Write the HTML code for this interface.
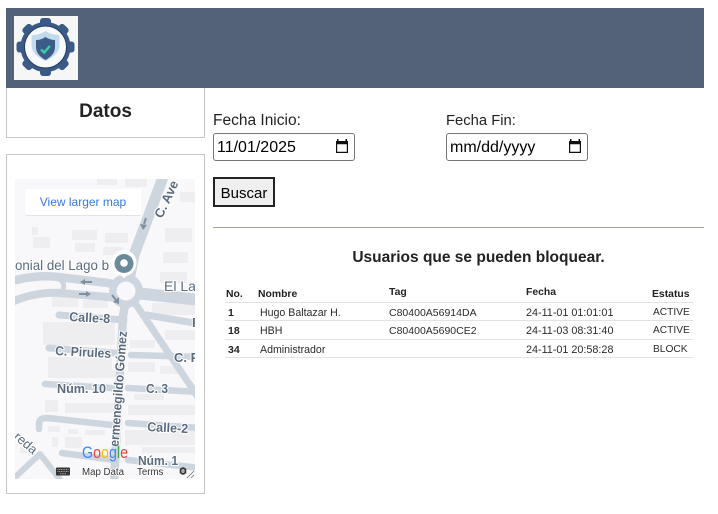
<!DOCTYPE html>
<html lang="es">
<head>
<meta charset="utf-8">
<style>
html,body{margin:0;padding:0;background:#fff;}
body{width:718px;height:514px;position:relative;overflow:hidden;font-family:"Liberation Sans",sans-serif;color:#212529;}
.a{position:absolute;white-space:nowrap;}
.hdr{left:6px;top:8px;width:698px;height:80px;background:#536179;}
.logo{left:14px;top:16px;width:64px;height:64px;background:#f6f6f6;}
.box{border:1px solid #c6c6c6;box-sizing:border-box;}
.lab{color:#222;line-height:18px;}
.inp{box-sizing:border-box;width:142px;height:28px;border:1px solid #767676;border-radius:3px;background:#fff;font-size:16px;color:#000;line-height:28px;padding-left:3px;}
.inp svg{position:absolute;right:4px;top:4px;}
.btn{left:213px;top:177px;width:62px;height:30px;box-sizing:border-box;border:2px solid #222;background:#efefef;font-size:15px;color:#000;text-align:center;line-height:29px;}
.th{font-size:10.4px;font-weight:bold;color:#222;line-height:12px;}
.td{font-size:10.6px;color:#2b2b2b;line-height:12px;}
.tb{font-size:10.5px;font-weight:bold;color:#222;line-height:12px;}
.ln{left:225px;width:468px;height:1px;background:#e2e2e2;}
</style>
</head>
<body>
<div class="a hdr"></div>
<div class="a logo">
<svg width="64" height="64" viewBox="0 0 64 64">
<g fill="#3c5a86">
<circle cx="31.500" cy="31" r="25"/>
<rect x="26" y="2" width="11" height="10" rx="3"/>
<rect x="26" y="50" width="11" height="10" rx="3"/>
<rect x="2.500" y="25.500" width="10" height="11" rx="3"/>
<rect x="50.500" y="25.500" width="10" height="11" rx="3"/>
<rect x="26" y="2" width="11" height="10" rx="3" transform="rotate(45 31.500 31)"/>
<rect x="26" y="2" width="11" height="10" rx="3" transform="rotate(135 31.500 31)"/>
<rect x="26" y="2" width="11" height="10" rx="3" transform="rotate(225 31.500 31)"/>
<rect x="26" y="2" width="11" height="10" rx="3" transform="rotate(315 31.500 31)"/>
</g>
<circle cx="31.500" cy="31" r="21" fill="#f8f9fa" stroke="#1f3d63" stroke-width="1"/>
<path d="M31.500 15 C36 18 41 19 45.500 19 L45.500 29 C45.500 36 40 41 31.500 45 C23 41 17.500 36 17.500 29 L17.500 19 C22 19 27 18 31.500 15Z" fill="#c2d9ee"/>
<path d="M31.500 21 C34.500 23 37.500 24 41 24 L41 31 C41 37 37 41 31.500 44 C26 41 22 37 22 31 L22 24 C25.500 24 28.500 23 31.500 21Z" fill="#3d5c88"/>
<path d="M27 33.500 L30.300 36.500 L35.800 30" fill="none" stroke="#36d0a5" stroke-width="2.400"/>
</svg>
</div>

<div class="a box" style="left:6px;top:88px;width:199px;height:50px;border-top:none;"></div>
<div class="a" style="left:6px;top:100px;width:199px;text-align:center;font-size:19px;font-weight:bold;color:#222;line-height:24px;">Datos</div>
<div class="a box" style="left:6px;top:154px;width:199px;height:340px;"></div>

<svg class="a" style="left:15px;top:179px;" width="180" height="300" viewBox="15 179 180 300">
<rect x="15" y="179" width="180" height="300" fill="#f8f7f9"/>
<g fill="#eeeef0">
<rect x="97" y="179" width="20" height="6"/><rect x="125" y="179" width="22" height="8"/>
<rect x="180" y="192" width="15" height="10"/>
<rect x="32" y="227" width="6" height="8"/><rect x="33" y="237" width="17" height="11"/>
<rect x="72" y="230" width="25" height="10"/><rect x="75" y="243" width="20" height="9"/>
<rect x="105" y="233" width="23" height="10"/><rect x="103" y="247" width="20" height="8"/>
<rect x="165" y="228" width="27" height="14"/><rect x="163" y="252" width="25" height="11"/>
<rect x="160" y="272" width="27" height="11"/>
<rect x="52" y="297" width="26" height="10"/><rect x="83" y="300" width="25" height="8"/>
<rect x="152" y="303" width="43" height="12"/><rect x="165" y="330" width="30" height="10"/>
<rect x="43" y="322" width="72" height="23"/>
<rect x="130" y="340" width="25" height="8"/>
<rect x="48" y="357" width="64" height="13"/><rect x="48" y="370" width="67" height="8"/>
<rect x="128" y="362" width="27" height="10"/><rect x="160" y="366" width="18" height="8"/>
<rect x="45" y="400" width="13" height="12"/><rect x="65" y="403" width="50" height="10"/>
<rect x="128" y="405" width="67" height="10"/><rect x="134" y="394" width="30" height="6"/>
<rect x="48" y="426" width="12" height="6"/><rect x="68" y="429" width="10" height="5"/><rect x="85" y="430" width="20" height="5"/>
<rect x="52" y="437" width="6" height="10"/><rect x="65" y="437" width="17" height="11"/>
<rect x="125" y="430" width="70" height="15"/><rect x="142" y="447" width="53" height="6"/>
<rect x="20" y="447" width="10" height="6"/>
</g>
<g fill="none" stroke="#cdd6df" stroke-linecap="round" stroke-linejoin="round">
<path d="M165 172 L134 255 L128 285" stroke-width="11"/>
<path d="M8 282 C25 277 45 275 58 277 L108 283 L126 287" stroke-width="8.500"/>
<path d="M8 304 C25 295 45 292 60 293 L108 297 L126 299" stroke-width="8"/>
<path d="M58 278 C64 281 65 286 62 292" stroke-width="5"/>
<path d="M126 292 L200 300" stroke-width="12"/>
<path d="M147 315 L200 324" stroke-width="7"/>
<path d="M126 300 L123 316 L114 482" stroke-width="8.500"/>
<path d="M135 303 L200 400" stroke-width="7"/>
<path d="M59 315 L124 320" stroke-width="7"/>
<path d="M49 348 L115 353" stroke-width="7"/>
<path d="M131 355 L200 357" stroke-width="6.500"/>
<path d="M45 384 L112 388" stroke-width="6.500"/>
<path d="M128 388 L200 392" stroke-width="6.500"/>
<path d="M39 429 L39 424 C39 419 42 418 48 418 L112 425" stroke-width="6.500"/>
<path d="M128 423 L200 428" stroke-width="6.500"/>
<path d="M62 453 L115 460" stroke-width="6.500"/>
<path d="M128 460 L200 468" stroke-width="6.500"/>
<path d="M12 480 L40 454 L62 482" stroke-width="6"/>
</g>
<circle cx="126" cy="291" r="17" fill="#cdd6df"/>
<circle cx="126" cy="291" r="9.500" fill="#f8f7f9"/>
<g stroke="#7f90a1" stroke-width="2" fill="#7f90a1">
<path d="M92 282 H84" fill="none"/><path d="M85 279 L80 282 L85 285Z" stroke="none"/>
<path d="M79 294 H87" fill="none"/><path d="M86 291 L91 294 L86 297Z" stroke="none"/>
<path d="M112 295 L116 300" fill="none"/><path d="M119 297 L119 304 L113 302Z" stroke="none"/>
<path d="M146 218 L144 224" fill="none"/><path d="M140 224 L143 230 L147 225Z" stroke="none"/>
</g>
<g font-family="'Liberation Sans',sans-serif" fill="#5a6b7e" stroke="#fff" stroke-width="2" paint-order="stroke" font-size="13">
<text x="15" y="270" font-size="14" textLength="94" lengthAdjust="spacingAndGlyphs">onial del Lago b</text>
<text x="164" y="291" font-size="14">El Lag</text>
<text x="69" y="321" font-weight="bold" textLength="41" lengthAdjust="spacingAndGlyphs" transform="rotate(3 69 321)">Calle-8</text>
<text x="55" y="355" font-weight="bold" textLength="56" lengthAdjust="spacingAndGlyphs" transform="rotate(3 55 355)">C. Pirules</text>
<text x="174" y="362" font-weight="bold">C. P</text>
<text x="57" y="393" font-weight="bold" textLength="49" lengthAdjust="spacingAndGlyphs">Núm. 10</text>
<text x="146" y="393" font-weight="bold" textLength="22" lengthAdjust="spacingAndGlyphs">C. 3</text>
<text x="147" y="431" font-weight="bold" textLength="41" lengthAdjust="spacingAndGlyphs" transform="rotate(3 147 431)">Calle-2</text>
<text x="138" y="465" font-weight="bold" textLength="40" lengthAdjust="spacingAndGlyphs">Núm. 1</text>
<text x="192" y="327" font-weight="bold">F</text>
<text x="0" y="0" transform="translate(13 438) rotate(40)">reda</text>
<text x="0" y="0" font-weight="bold" font-size="13" transform="translate(162 219) rotate(-65)">C. Ave</text>
<text x="0" y="0" font-weight="bold" font-size="13" transform="translate(118.500 447) rotate(-85.800)" textLength="116" lengthAdjust="spacingAndGlyphs">ermenegildo Gómez</text>
</g>
<path d="M124 278 L114 270 A12.500 12.500 0 1 1 134 270Z" fill="#fff"/>
<circle cx="124" cy="264" r="12" fill="#fff"/>
<circle cx="124" cy="263.500" r="9.500" fill="#6b8a99"/>
<circle cx="124" cy="263" r="3.800" fill="#fff"/>
<rect x="25" y="190" width="116" height="26" rx="1" fill="#000" opacity=".08"/>
<rect x="25" y="189" width="116" height="26" rx="1" fill="#fff"/>
<text x="83" y="206" text-anchor="middle" font-family="'Liberation Sans',sans-serif" font-size="12" fill="#3b78d8">View larger map</text>
<text x="82" y="458" font-family="'Liberation Sans',sans-serif" font-size="16.500" textLength="46" lengthAdjust="spacingAndGlyphs"><tspan fill="#4285f4">G</tspan><tspan fill="#ea4335">o</tspan><tspan fill="#fbbc05">o</tspan><tspan fill="#4285f4">g</tspan><tspan fill="#34a853">l</tspan><tspan fill="#ea4335">e</tspan></text>
<rect x="56" y="467.500" width="14" height="8" rx="1" fill="#333"/>
<path d="M57.500 469.500 H68.500 M57.500 471.500 H68.500 M60 473.800 H66" stroke="#ccc" stroke-width=".8" stroke-dasharray="1 .7"/>
<g font-family="'Liberation Sans',sans-serif" font-size="9.700" fill="#333" stroke="#fff" stroke-width="1.500" paint-order="stroke">
<text x="82" y="475">Map Data</text>
<text x="137" y="475">Terms</text>
</g>
<ellipse cx="183" cy="471" rx="2.500" ry="3" fill="none" stroke="#333" stroke-width="1.500"/>
<path d="M179.500 469 H186.500 M179.500 471 H186.500 M179.500 473 H186.500" stroke="#333" stroke-width=".8"/>
<path d="M187 478 L194 471 M191 478 L194 475" stroke="#777" stroke-width=".8"/>
</svg>

<div class="a lab" style="left:213px;top:112px;font-size:15.500px;">Fecha Inicio:</div>
<div class="a inp" style="left:213px;top:133px;">11/01/2025
<svg width="16" height="16" viewBox="0 0 16 16"><path d="M3 1V3H2V15H14V3H13V1H11.500V3H4.500V1ZM3.200 6.200H12.800V13.800H3.200Z" fill="#111" fill-rule="evenodd"/></svg></div>
<div class="a lab" style="left:446px;top:112px;font-size:14.800px;">Fecha Fin:</div>
<div class="a inp" style="left:446px;top:133px;">mm/dd/yyyy
<svg width="16" height="16" viewBox="0 0 16 16"><path d="M3 1V3H2V15H14V3H13V1H11.500V3H4.500V1ZM3.200 6.200H12.800V13.800H3.200Z" fill="#111" fill-rule="evenodd"/></svg></div>
<div class="a btn">Buscar</div>
<div class="a" style="left:213px;top:227px;width:491px;height:1px;background:#a5a594;"></div>

<div class="a" style="left:213px;top:249px;width:531px;text-align:center;font-size:15.500px;font-weight:bold;color:#222;line-height:18px;">Usuarios que se pueden bloquear.</div>

<div class="a th" style="left:226px;top:289px;">No.</div>
<div class="a th" style="left:258px;top:289px;">Nombre</div>
<div class="a th" style="left:389px;top:287px;">Tag</div>
<div class="a th" style="left:526px;top:287px;">Fecha</div>
<div class="a th" style="left:652px;top:289px;">Estatus</div>
<div class="a ln" style="top:302px;"></div>
<div class="a tb" style="left:228px;top:307px;">1</div>
<div class="a td" style="left:260px;top:307px;">Hugo Baltazar H.</div>
<div class="a td" style="left:389px;top:307px;font-size:10.500px;">C80400A56914DA</div>
<div class="a td" style="left:526px;top:307px;font-size:10.800px;">24-11-01 01:01:01</div>
<div class="a td" style="left:653px;top:307px;font-size:10.200px;">ACTIVE</div>
<div class="a ln" style="top:320px;"></div>
<div class="a tb" style="left:228px;top:325px;">18</div>
<div class="a td" style="left:260px;top:325px;">HBH</div>
<div class="a td" style="left:389px;top:325px;font-size:10.500px;">C80400A5690CE2</div>
<div class="a td" style="left:526px;top:325px;font-size:10.800px;">24-11-03 08:31:40</div>
<div class="a td" style="left:653px;top:325px;font-size:10.200px;">ACTIVE</div>
<div class="a ln" style="top:339px;"></div>
<div class="a tb" style="left:228px;top:344px;">34</div>
<div class="a td" style="left:260px;top:344px;">Administrador</div>
<div class="a td" style="left:526px;top:344px;font-size:10.800px;">24-11-01 20:58:28</div>
<div class="a td" style="left:653px;top:344px;font-size:10.200px;">BLOCK</div>
<div class="a ln" style="top:357px;"></div>
</body>
</html>
